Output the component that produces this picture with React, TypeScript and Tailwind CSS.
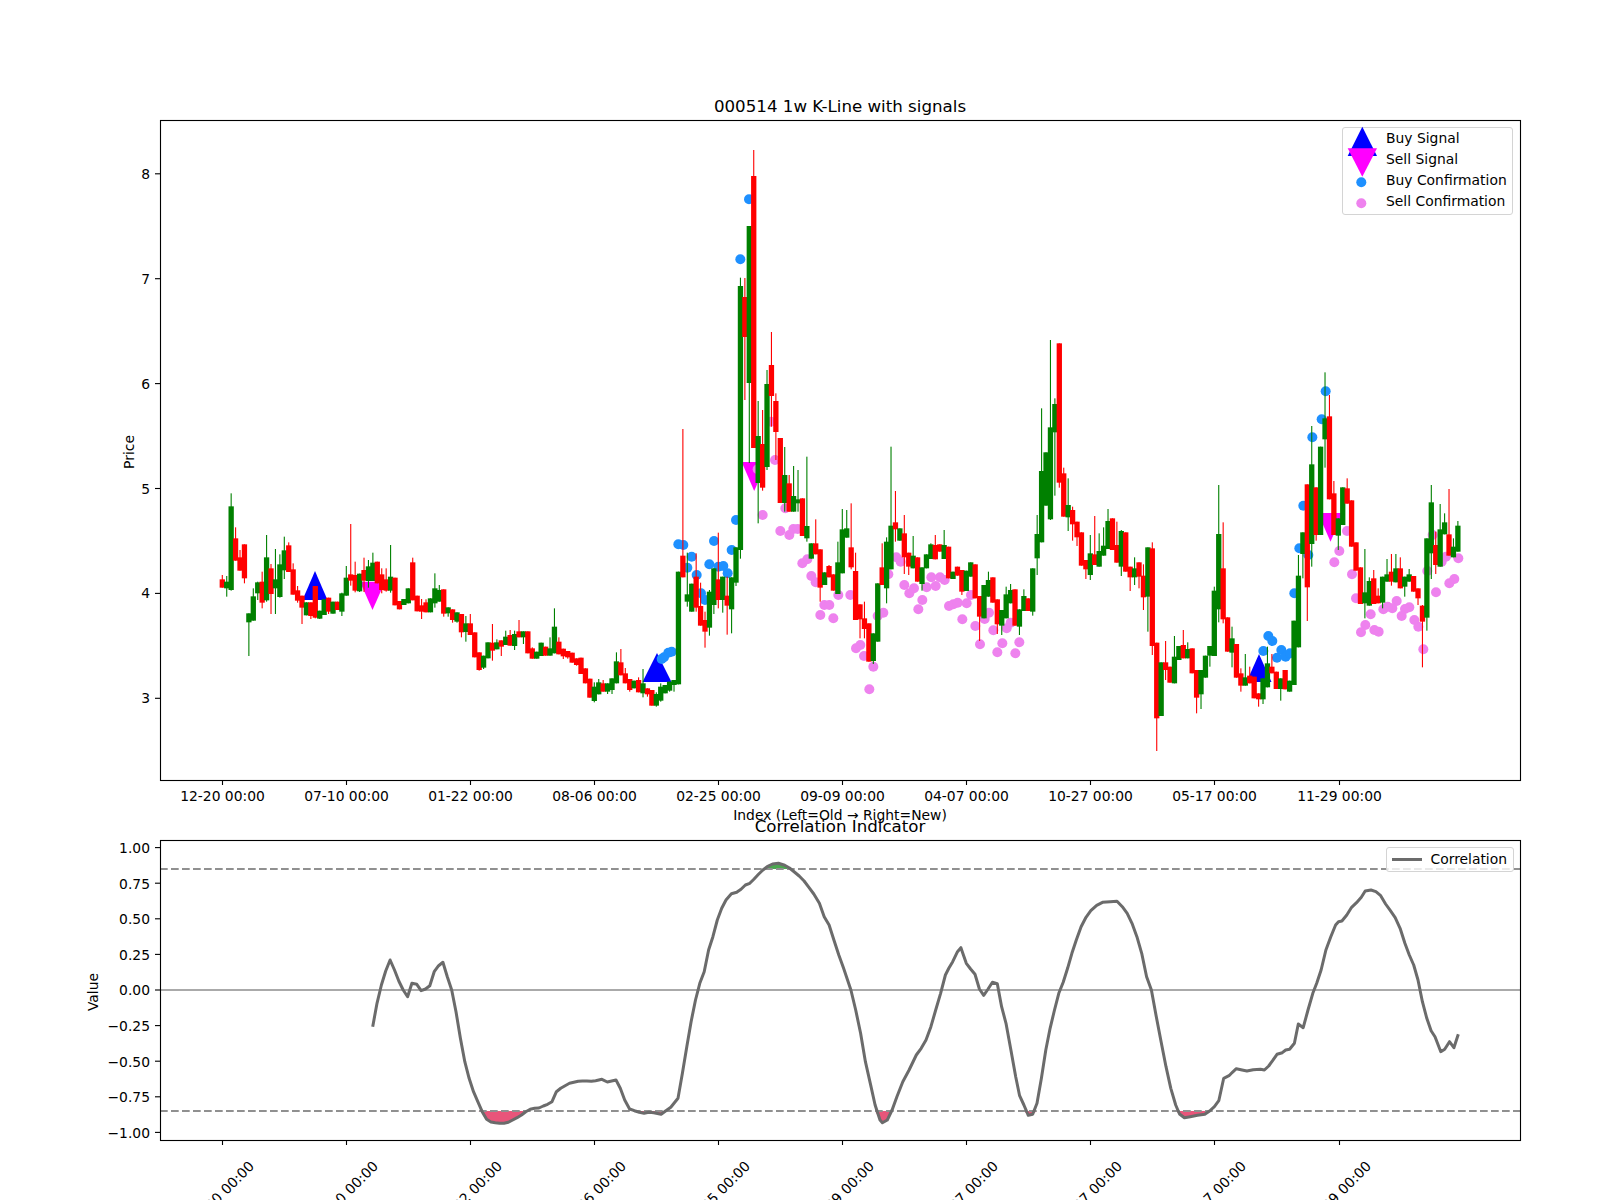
const FONT = "font-['DejaVu_Sans',sans-serif]"

// candle values are read off x3 crops of the chart: color wickTop,bodyTop,bodyBottom,wickBottom
const CANDLES_A = `r465,478,503,503 g468,485,505,530 g220,259,510,512 r322,355,422,422 r390,412,452,452 r373,373,475,490 g580,580,607,708 g505,529,602,602
g485,487,520,540 r455,485,548,565 g345,412,541,545 r432,445,522,582 g387,478,505,582 g403,433,531,533 g350,391,451,477 r367,376,456,456 r430,448,524,524 r498,511,542,548
r527,527,563,612 g547,547,586,586 r547,547,588,597 r498,498,593,595 g572,572,596,597 g538,538,585,585 r533,533,575,582 g545,545,581,581 r545,545,570,570 g518,520,575,588
g438,473,527,527 r312,463,482,497 r425,465,512,517 g461,461,514,516 r413,450,482,516 g420,439,483,503 g398,428,483,483 r425,425,490,490 r445,463,510,520 r445,478,512,515
g375,470,512,518 r473,473,556,556 r543,543,568,568 g537,537,555,555 g505,505,550,550 r413,427,541,541 r527,527,574,574 r537,556,575,597 r538,547,577,577 g535,535,577,577
g460,505,550,563 g495,510,545,545 r508,508,581,590 g562,562,580,590 r568,568,600,608 g577,577,605,608 r582,582,637,652 g588,610,636,665 r582,610,645,645 r637,637,712,712
r697,697,750,752 g707,707,743,747 g667,667,715,715 r612,668,692,722 g658,667,688,688 r661,661,680,708 g632,650,675,675 r630,645,677,677 g632,642,678,690 r600,634,652,652
g634,634,652,672 r634,634,700,700 r682,685,716,716 g695,695,716,716 g668,668,708,708 r680,680,707,707 g652,685,707,707 g565,620,700,700 r652,665,703,703 r686,686,709,717
r693,693,712,716 r698,698,728,728 r715,715,735,737 r713,713,762,762 r745,745,790,790 r776,776,833,833 g787,800,843,847 g777,787,823,823 r780,790,815,815 g790,790,815,822
g775,775,810,822 g697,724,790,790 r687,727,766,766 r744,760,790,790 r777,777,810,815 g782,782,805,805 r772,780,817,817 g747,790,820,832 r805,805,823,830 r810,810,857,857
g817,822,857,860`

const CANDLES_B = `g670,680,722,725 g675,675,700,700 g665,665,692,695 g660,660,675,695 g335,335,673,673 r-93,287,352,352 g278,403,425,440 g371,371,455,455 r280,350,443,455 r368,438,497,497
r455,480,515,563 g390,395,503,527 g325,325,435,462 r218,358,420,445 g350,350,420,458 r350,407,437,524 g352,352,448,520 g262,262,368,378 g-547,-522,270,296 r-546,-489,-369,-180
g-702,-702,-231,9 r-930,-852,-36,-36 g-177,-72,69,190 r-150,-48,83,92 g-270,-228,21,30 r-384,-285,-192,-100 r-200,-177,-84,0 r-66,-66,129,129 g-39,45,129,155 r45,70,155,155
g18,108,155,155 g30,118,130,155 r115,115,228,228 g-10,198,235,245 g250,250,296,296 r178,250,283,283 r268,268,383,425 g337,337,375,375 r315,318,352,352 r343,343,392,392
g245,307,402,402 g147,208,340,340 g150,205,233,233 r130,262,322,328 r278,333,480,480 r433,433,478,535 r425,475,507,535 r490,490,605,605 g520,520,603,612 g370,370,545,545
r250,322,375,375 g232,245,385,430 g-40,197,328,328 r93,187,208,245 g205,205,242,242 r165,220,292,342 r278,278,320,345 g228,287,325,325 r292,292,365,365 g322,322,372,392
g283,283,325,325 g250,253,297,297 r225,255,298,298 r253,253,275,275 g210,255,297,297 r260,260,355,355 g335,335,357,357 r320,320,347,347 r330,330,395,405 g332,332,393,393
g307,307,350,350 r313,313,415,415 r408,408,470,543 g375,375,475,475 g335,360,410,410 r352,352,428,428 r418,418,493,522 g450,450,497,525 g380,403,475,475 g372,390,430,430
r388,388,497,497 g448,448,500,525 g388,408,453,453 r415,415,453,453 g325,325,455,467 g165,222,295,345`

const CANDLES_C = `g235,423,637,637 g367,367,527,527 g30,292,568,570 g205,222,307,497 r40,40,458,473 r413,430,560,560 g445,525,562,603 r530,540,583,632 r575,575,622,648 r607,607,707,707
r690,690,718,747 g615,670,735,750 r558,673,705,705 g610,663,710,710 g592,647,677,677 g537,573,657,657 r565,565,660,660 r575,645,698,698 g600,603,710,738 r607,607,725,725
r710,710,742,783 g682,715,742,765 r697,697,740,775 r703,737,802,840 g652,652,800,905 r637,655,948,975 r938,938,1165,1263 g997,997,1158,1158 r933,997,1020,1050 r1010,1010,1058,1058
g918,980,1060,1060 g948,948,990,990 r900,945,985,985 g937,957,985,985 r955,955,1030,1030 r1020,1020,1103,1150 g1020,1020,1093,1137 g977,977,1043,1043 g948,948,977,1010 g770,782,978,978
g465,612,838,877 r577,715,868,880 r862,862,965,965 g890,925,968,1012 r942,942,1043,1043 r1015,1030,1067,1085 g972,1042,1067,1067 r1010,1037,1060,1060 r1040,1040,1105,1105 r1090,1090,1108,1130
g1045,1045,1108,1122 g950,1000,1072,1072 r972,1010,1030,1030 r1025,1025,1077,1077 g1045,1045,1077,1112 r1020,1020,1078,1078 g1052,1052,1085,1085 g872,872,1065,1065 g675,737,952,952 g607,607,672,745
r463,463,772,873 g288,403,642,710 r472,472,615,632 g350,350,615,615 g127,265,328,413 r195,259,508,508 r453,490,615,615 g565,565,617,660 g472,472,585,585 r445,475,521,521
r511,511,650,650 r637,637,722,722 r712,712,822,822 g657,787,820,865 g742,753,827,827 r720,745,822,822 r775,797,820,820 g740,740,818,835 g687,733,755,755 r672,725,755,767
g672,715,757,757 r682,715,775,775 g740,740,770,800 g717,733,755,755 r738,738,785,785 r775,775,805,825 r825,827,875,1012 g625,625,863,902 g465,517,670,747 r605,645,705,732
g522,598,710,710 g550,577,613,613 r477,613,677,677 g625,650,682,682 g573,587,665,665`

type Candle = { up: boolean; wickTop: number; top: number; bottom: number; wickBottom: number }

function parseCandles(raw: string, originY: number): Candle[] {
  return raw
    .trim()
    .split(/\s+/)
    .map((item) => {
      const [a, b, c, d] = item.slice(1).split(',').map(Number)
      return {
        up: item[0] === 'r',
        wickTop: originY + a / 3,
        top: originY + b / 3,
        bottom: originY + c / 3,
        wickBottom: originY + d / 3,
      }
    })
}

const candles = [
  ...parseCandles(CANDLES_A, 420),
  ...parseCandles(CANDLES_B, 460),
  ...parseCandles(CANDLES_C, 330),
]

const toDots = (raw: number[], ox: number, oy: number) => {
  const out: [number, number][] = []
  for (let i = 0; i < raw.length; i += 2) out.push([ox + raw[i] / 3, oy + raw[i + 1] / 3])
  return out
}

const buyDots = [
  ...toDots([65, 597, 72, 592, 85, 578, 95, 575, 115, 253, 130, 255, 142, 323, 155, 290, 170, 345, 183, 400, 195, 420, 208, 313, 222, 243, 235, 320, 250, 318, 263, 340, 275, 270, 288, 180], 640, 460),
  ...toDots([327, 238, 301, 418], 640, 120),
  ...toDots([857, 184, 845, 268, 817, 322, 790, 527, 778, 655, 805, 675, 763, 790, 670, 963, 685, 918, 697, 933, 711, 983, 724, 960, 737, 980, 750, 970], 1040, 330),
]

const sellDots = [
  ...toDots([368, 165, 421, 213, 436, 145, 448, 225, 460, 207, 473, 207, 487, 310, 502, 298, 514, 348, 527, 367, 541, 465, 553, 435, 568, 435, 580, 475, 595, 405, 631, 405, 648, 565, 661, 555, 672, 588, 700, 620, 688, 688, 713, 468, 730, 458, 745, 343, 769, 292, 782, 305, 793, 375, 808, 400, 822, 385, 835, 448, 847, 420, 860, 382, 874, 352, 887, 378, 900, 352, 914, 360, 927, 438, 940, 433, 953, 428, 967, 478, 980, 430, 993, 405, 1006, 498, 1020, 553, 1034, 477, 1047, 458, 1060, 511, 1072, 577, 1087, 550, 1100, 505, 1112, 488, 1126, 580, 1138, 547], 640, 460),
  ...toDots([393, 905, 405, 1020, 353, 1048], 640, 120),
  ...toDots([1255, 685, 1243, 747, 1228, 760, 1188, 787, 1178, 615, 1218, 680, 1205, 695, 1162, 723, 1150, 958, 1135, 890, 1123, 870, 1108, 832, 1095, 837, 1085, 858, 1070, 813, 1057, 835, 1043, 830, 1030, 838, 1016, 905, 1003, 900, 992, 853, 976, 885, 963, 907, 948, 805, 936, 733, 921, 603, 898, 663, 883, 697], 1040, 330),
]

const LINE_LEFT = [645, 740, 654, 670, 663, 615, 672, 573, 681, 540, 690, 570, 699, 603, 708, 630, 717, 650, 726, 610, 736, 613, 745, 632, 754, 627, 763, 617, 772, 575, 781, 557, 790, 547, 799, 590, 808, 630, 817, 695, 826, 775, 835, 845, 844, 895, 853, 935, 862, 965, 871, 995, 880, 1018, 889, 1026, 898, 1028, 907, 1030, 916, 1030, 925, 1027, 934, 1020, 943, 1013, 952, 1005, 961, 995, 970, 988, 979, 985, 988, 984, 997, 978, 1006, 973, 1015, 965, 1024, 935, 1033, 925, 1042, 917, 1051, 910, 1060, 907, 1069, 904, 1078, 903, 1087, 903, 1096, 904, 1105, 902, 1118, 898, 1129, 906, 1147, 900, 1156, 925, 1165, 960, 1175, 987, 1185, 992, 1195, 997, 1205, 1000, 1215, 997, 1225, 998, 1240, 1003, 1250, 992, 1260, 982, 1275, 955, 1284, 880, 1293, 800, 1302, 725, 1311, 660, 1320, 610, 1329, 575, 1338, 510, 1347, 470, 1356, 420, 1365, 385, 1374, 360, 1385, 341, 1396, 337, 1405, 328, 1414, 315, 1423, 310, 1432, 297, 1441, 283, 1450, 270, 1459, 260, 1470, 252, 1482, 250, 1495, 256, 1505, 264, 1515, 276, 1525, 288, 1535, 303, 1545, 322, 1555, 342]
const LINE_RIGHT = [40, 370, 50, 410, 60, 435, 70, 480, 80, 525, 90, 565, 105, 630, 115, 690, 125, 760, 135, 845, 145, 910, 155, 975, 165, 1020, 170, 1028, 180, 1020, 190, 990, 200, 950, 212, 905, 225, 870, 240, 825, 250, 805, 260, 780, 270, 740, 280, 690, 290, 640, 300, 585, 307, 565, 315, 545, 325, 515, 332, 503, 337, 525, 343, 550, 352, 567, 361, 583, 370, 627, 379, 646, 388, 627, 397, 607, 407, 611, 416, 680, 425, 730, 435, 810, 445, 890, 453, 947, 462, 975, 471, 1006, 480, 1003, 489, 970, 498, 895, 507, 810, 516, 745, 525, 690, 534, 640, 543, 607, 552, 565, 561, 520, 570, 480, 580, 440, 590, 412, 600, 392, 612, 376, 624, 367, 640, 365, 654, 364, 665, 380, 675, 400, 685, 430, 695, 470, 705, 520, 715, 590, 725, 630, 735, 710, 745, 785, 755, 860, 765, 925, 775, 975, 783, 1002, 793, 1013, 805, 1010, 820, 1006, 835, 1003, 845, 993, 855, 980, 864, 962, 874, 895, 885, 887, 892, 877, 900, 866, 912, 870, 922, 873, 935, 869, 950, 868, 958, 870, 967, 858, 975, 842, 984, 823, 995, 818, 1002, 810, 1010, 808, 1020, 790, 1028, 732, 1038, 743, 1048, 690, 1058, 640, 1066, 610, 1075, 570, 1085, 510, 1095, 470, 1105, 435, 1111, 425, 1118, 423, 1128, 405, 1138, 382, 1148, 368, 1158, 352, 1166, 333, 1178, 330, 1188, 335, 1198, 347, 1208, 372, 1218, 392, 1228, 413, 1238, 445, 1248, 490, 1257, 525, 1266, 555, 1275, 600, 1284, 665, 1293, 715, 1302, 752, 1310, 770, 1322, 815, 1330, 808, 1340, 785, 1349, 803, 1358, 763]

const toLine = (raw: number[], ox: number) => {
  const out: [number, number][] = []
  for (let i = 0; i < raw.length; i += 2) out.push([ox + raw[i] / 2.063, 780 + raw[i + 1] / 3])
  return out
}

const corr = [...toLine(LINE_LEFT, 60), ...toLine(LINE_RIGHT, 800)]

const UPPER = 869
const LOWER = 1111

const poly = (pts: [number, number][]) => pts.map(([x, y]) => `${x.toFixed(1)},${y.toFixed(1)}`).join(' ')

const TICK_X = [222.5, 346.5, 470.5, 594.5, 718.5, 842.5, 966.5, 1090.5, 1214.5, 1339.5]
const DATES = ['12-20 00:00', '07-10 00:00', '01-22 00:00', '08-06 00:00', '02-25 00:00', '09-09 00:00', '04-07 00:00', '10-27 00:00', '05-17 00:00', '11-29 00:00']
const PRICE_TICKS = [3, 4, 5, 6, 7, 8]
const VALUE_TICKS = [
  ['1.00', 847.6], ['0.75', 883.2], ['0.50', 918.8], ['0.25', 954.4], ['0.00', 990],
  ['−0.25', 1025.6], ['−0.50', 1061.2], ['−0.75', 1096.8], ['−1.00', 1132.4],
] as const

const priceY = (p: number) => 698.3 - (p - 3) * 104.9

const BUY_SIGNALS = ['315,571 302.5,600 327.5,600', '657,653 642.5,682 671.5,682', '1259,654 1246.5,682 1271.5,682']
const SELL_SIGNALS = ['360,581.7 385,581.7 372.5,610', '741.7,462 766.7,462 754.2,491', '1318,513 1343,513 1330.5,541.7']

function PriceChart() {
  return (
    <div className="relative h-[820px] w-full">
      <svg viewBox="0 0 1600 820" className="block h-[820px] w-[1600px] overflow-visible">
        <text x="840" y="112" textAnchor="middle" fontSize="16.67" fill="#000">000514 1w K-Line with signals</text>

        {BUY_SIGNALS.map((p) => <polygon key={p} points={p} fill="#0000ff" />)}
        {SELL_SIGNALS.map((p) => <polygon key={p} points={p} fill="#ff00ff" />)}
        {buyDots.map(([x, y], i) => <circle key={i} cx={x} cy={y} r="5" fill="#1e90ff" />)}
        {sellDots.map(([x, y], i) => <circle key={i} cx={x} cy={y} r="5" fill="#ee82ee" />)}

        {candles.map((c, i) => {
          const x = 222.3 + i * 4.4286
          const color = c.up ? '#ff0000' : '#008000'
          return (
            <g key={i} fill={color}>
              <rect x={x - 0.55} y={c.wickTop} width="1.1" height={c.wickBottom - c.wickTop} />
              <rect x={x - 2.65} y={c.top} width="5.3" height={c.bottom - c.top} />
            </g>
          )
        })}

        <rect x="160.5" y="120.5" width="1360" height="660" fill="none" stroke="#000" strokeWidth="1.11" />

        {TICK_X.map((x, i) => (
          <g key={x}>
            <line x1={x} x2={x} y1="780" y2="785" stroke="#000" strokeWidth="1.11" />
            <text x={x} y="801" textAnchor="middle" fontSize="13.89" fill="#000">{DATES[i]}</text>
          </g>
        ))}
        {PRICE_TICKS.map((p) => (
          <g key={p}>
            <line x1="155" x2="160" y1={priceY(p)} y2={priceY(p)} stroke="#000" strokeWidth="1.11" />
            <text x="150" y={priceY(p) + 5} textAnchor="end" fontSize="13.89" fill="#000">{p}</text>
          </g>
        ))}
        <text transform="translate(134 452) rotate(-90)" textAnchor="middle" fontSize="13.89" fill="#000">Price</text>
        <text x="840" y="820" textAnchor="middle" fontSize="13.89" fill="#000">Index (Left=Old → Right=New)</text>
      </svg>

      <div className="absolute left-[1342px] top-[127px] h-[88px] w-[171px] rounded-[3px] border border-[#d4d4d4] bg-white/80">
        <svg viewBox="1342 120 40 60" className="absolute left-0 top-[-7px] h-[60px] w-[40px] overflow-visible">
          <polygon points="1361.3,125.7 1346.7,155 1376,155" fill="#0000ff" />
          <polygon points="1346.7,147.3 1376,147.3 1361.3,175.7" fill="#ff00ff" />
          <circle cx="1360.3" cy="181.3" r="5" fill="#1e90ff" />
          <circle cx="1360.3" cy="202.3" r="5" fill="#ee82ee" />
        </svg>
        <div className="flex flex-col gap-[5.2px] pl-[43px] pt-[1.5px] text-[13.89px] leading-[16px] text-black">
          <span>Buy Signal</span>
          <span>Sell Signal</span>
          <span>Buy Confirmation</span>
          <span>Sell Confirmation</span>
        </div>
      </div>
    </div>
  )
}

function CorrelationChart() {
  const low = corr.map(([x, y]): [number, number] => [x, Math.max(y, LOWER)])
  const high = corr.map(([x, y]): [number, number] => [x, Math.min(y, UPPER)])
  return (
    <div className="relative h-[380px] w-full">
      <svg viewBox="0 820 1600 380" className="block h-[380px] w-[1600px] overflow-visible">
        <polygon points={poly(low)} fill="#e8557a" />
        <polygon points={poly(high)} fill="#4aa84f" />

        <line x1="160" x2="1520" y1="990" y2="990" stroke="#aaaaaa" strokeWidth="2.2" />
        <line x1="160" x2="1520" y1={UPPER} y2={UPPER} stroke="#909090" strokeWidth="2.2" strokeDasharray="7.7 3.3" />
        <line x1="160" x2="1520" y1={LOWER} y2={LOWER} stroke="#909090" strokeWidth="2.2" strokeDasharray="7.7 3.3" />
        <polyline points={poly(corr)} fill="none" stroke="#6b6b6b" strokeWidth="3" strokeLinejoin="round" />

        <rect x="160.5" y="840.5" width="1360" height="300" fill="none" stroke="#000" strokeWidth="1.11" />

        <text x="840" y="832" textAnchor="middle" fontSize="16.67" fill="#000">Correlation Indicator</text>

        {TICK_X.map((x, i) => (
          <g key={x}>
            <line x1={x} x2={x} y1="1140" y2="1145" stroke="#000" strokeWidth="1.11" />
            <text transform={`translate(${x - 1} 1193.5) rotate(-45)`} textAnchor="middle" dominantBaseline="central" fontSize="13.89" fill="#000">{DATES[i]}</text>
          </g>
        ))}
        {VALUE_TICKS.map(([label, y]) => (
          <g key={label}>
            <line x1="155" x2="160" y1={y} y2={y} stroke="#000" strokeWidth="1.11" />
            <text x="150" y={y + 5.3} textAnchor="end" fontSize="13.89" fill="#000">{label}</text>
          </g>
        ))}
        <text transform="translate(98 992) rotate(-90)" textAnchor="middle" fontSize="13.89" fill="#000">Value</text>
      </svg>

      <div className="absolute left-[1385.5px] top-[26.7px] flex h-[25px] w-[128px] items-center gap-[9px] rounded-[3px] border border-[#d4d4d4] bg-white/80 pl-[5px] text-[13.89px] leading-[16px] text-black">
        <span className="h-[3px] w-[30px] bg-[#6b6b6b]" />
        <span>Correlation</span>
      </div>
    </div>
  )
}

export default function App() {
  return (
    <div className={`flex h-[1200px] w-[1600px] flex-col overflow-hidden bg-white ${FONT}`}>
      <PriceChart />
      <CorrelationChart />
    </div>
  )
}
